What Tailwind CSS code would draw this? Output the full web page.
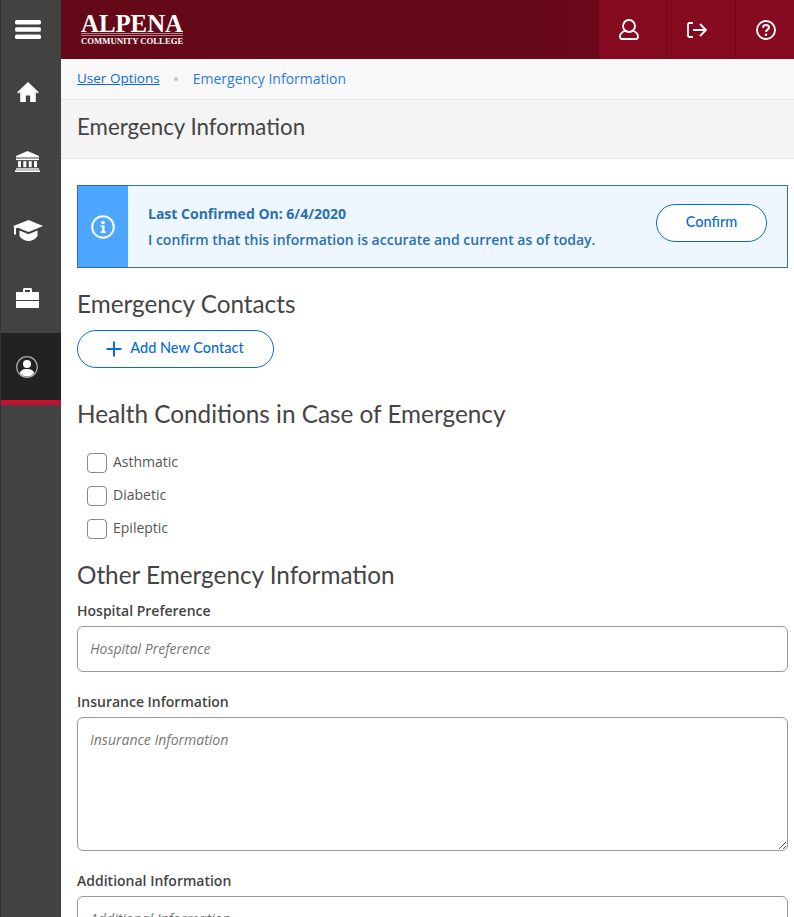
<!DOCTYPE html>
<html lang="en">
<head>
    <meta charset="UTF-8">
    <meta name="viewport" content="width=device-width, initial-scale=1.0">
    <title>Emergency Information</title>
    <script src="https://cdn.jsdelivr.net/npm/@tailwindcss/browser@4"></script>
</head>
<body class="font-['Open_Sans',sans-serif] bg-white text-[#444] h-[917px] overflow-hidden">
<div class="flex h-[917px] overflow-hidden">

    <!-- Sidebar -->
    <nav class="w-[61px] shrink-0 bg-[#424242] border-l border-[#333] flex flex-col items-stretch text-white">
        <div class="h-[59px] flex items-center justify-center pr-[6px]">
            <svg class="w-[26px] h-[19px]" viewBox="0 0 26 19" fill="#fff"><rect x="0" y="0" width="26" height="4.4" rx="1.6"/><rect x="0" y="7.3" width="26" height="4.4" rx="1.6"/><rect x="0" y="14.6" width="26" height="4.4" rx="1.6"/></svg>
        </div>
        <div class="h-[69px] flex items-center justify-center pr-[7px] pb-[3px]">
            <svg class="w-[22px] h-[20px]" viewBox="0 0 22 20" fill="#fff"><path d="M11 0 0.2 10.2 1.6 11.4 3.2 10V20H8.8V13.4H13.2V20H18.8V10L20.4 11.400 21.800 10.200Z"/></svg>
        </div>
        <div class="h-[68px] flex items-center justify-center pr-[7px] pb-[2px]">
            <svg class="w-[25px] h-[21px]" viewBox="0 0 25 21" fill="#fff"><path d="M12.5 0 24 5V6.5H1V5Z"/><rect x="1" y="7.5" width="23" height="1.6"/><rect x="3" y="10.2" width="3" height="6"/><rect x="8.3" y="10.2" width="3" height="6"/><rect x="13.7" y="10.2" width="3" height="6"/><rect x="19" y="10.2" width="3" height="6"/><rect x="1" y="17.3" width="23" height="1.4"/><rect x="0" y="19.3" width="25" height="1.7"/></svg>
        </div>
        <div class="h-[68px] flex items-center justify-center pr-[7px]">
            <svg class="w-[30px] h-[21px]" viewBox="0 0 30 21" fill="#fff"><path d="M15.5 0 30 6 15.5 12 4.5 7.6 3 8.4V14.5H1V7.6L0.4 6Z"/><path d="M6.5 10.5 15.5 14.2 24.5 10.5V16C22.5 19.5 18.5 21 15.5 21S8.5 19.5 6.5 16Z"/></svg>
        </div>
        <div class="h-[69px] flex items-center justify-center pr-[7px] pb-[2px]">
            <svg class="w-[23px] h-[20px]" viewBox="0 0 23 20" fill="#fff"><path d="M7 4V1.5C7 .7 7.7 0 8.5 0H14.5C15.3 0 16 .7 16 1.500V4H14V2H9V4Z"/><path d="M0 4H23V12H0Z"/><path d="M0 13H23V20H0Z"/></svg>
        </div>
        <div class="h-[67px] bg-[#222] flex items-center justify-center pr-[8px]">
            <svg class="w-[22px] h-[22px]" viewBox="0 0 22 22"><circle cx="11" cy="11" r="10.300" fill="none" stroke="#aaa" stroke-width="1.200"/><circle cx="11" cy="8" r="4" fill="#fff"/><path d="M3.800 17C5 13.500 8 13 11 13S17 13.500 18.200 17C16.500 19.500 13.500 20.500 11 20.500S5.500 19.500 3.800 17Z" fill="#fff"/></svg>
        </div>
        <div class="h-[5px] bg-[#c8102e]"></div>
    </nav>

    <div class="flex-1 min-w-0 flex flex-col">
        <!-- Top bar -->
        <header class="h-[59px] shrink-0 bg-gradient-to-r from-[#640818] to-[#6a0919] flex justify-between text-white">
            <div class="ml-[20px] pt-[12px] w-[102px] font-['Liberation_Serif',serif] font-bold leading-none">
                <div class="text-[24.800px] h-[20px] leading-[24px] whitespace-nowrap">ALPENA</div>
                <div class="mt-[1px] border-t border-b border-white/50 h-[3px]"></div>
                <div class="mt-[1px] text-[8.700px] whitespace-nowrap">COMMUNITY COLLEGE</div>
            </div>
            <div class="flex">
                <button class="w-[68px] pr-[8px] bg-[#860b20] border-r border-[#6a0919] flex items-center justify-center">
                    <svg class="w-[20px] h-[21px]" viewBox="0 0 20 21" fill="none" stroke="#fff" stroke-width="1.800"><circle cx="10" cy="7" r="6"/><path d="M6 12C3 13 1 15 1 17.500 1 19 2 20 3 20H17C18 20 19 19 19 17.500 19 15 17 13 14 12"/></svg>
                </button>
                <button class="w-[69px] pr-[8px] bg-[#860b20] border-r border-[#6a0919] flex items-center justify-center">
                    <svg class="w-[20px] h-[16px]" viewBox="0 0 20 16" fill="none" stroke="#fff" stroke-width="1.800"><path d="M6 1H2.500C1.600 1 1 1.600 1 2.500V13.500C1 14.400 1.600 15 2.500 15H6"/><path d="M6 8H19M13 2 19 8 13 14"/></svg>
                </button>
                <button class="w-[58px] pl-[2px] bg-[#860b20] flex items-center justify-center">
                    <svg class="w-[20px] h-[20px]" viewBox="0 0 20 20" fill="none" stroke="#fff" stroke-width="1.900"><circle cx="10" cy="10" r="9"/><path d="M7 7.800C7 6 8.400 5 10 5S13 6 13 7.500C13 9.700 10 9.600 10 12" stroke-width="2"/><circle cx="10" cy="14.800" r="1.200" fill="#fff" stroke="none"/></svg>
                </button>
            </div>
        </header>

        <!-- Breadcrumb -->
        <div class="h-[41px] shrink-0 bg-[#f8f8f8] border-b border-[#e3e3e3] pl-[16px] flex items-center text-[14px] pb-[1px]">
            <a class="text-[#0b6ad6] underline text-[13.500px]">User Options</a>
            <span class="ml-[14px] mr-[15px] w-[4px] h-[4px] rounded-full bg-[#c5c5c5]"></span>
            <span class="text-[#2f7bdc]">Emergency Information</span>
        </div>

        <!-- Page title -->
        <div class="h-[59px] shrink-0 bg-[#f4f4f4] border-b border-[#e3e3e3] pl-[16px] pb-[4px] flex items-center">
            <h1 class="font-['Lato',sans-serif] text-[22.300px] text-[#444]">Emergency Information</h1>
        </div>

        <!-- Content -->
        <main class="pl-[16px] pr-[6px] pt-[26px]">
            <div class="h-[83px] flex border border-[#2a6fb0] bg-[#eef7ff]">
                <div class="w-[50px] bg-[#4da6ff] flex items-center justify-center">
                    <svg class="w-[24px] h-[24px]" viewBox="0 0 24 24"><circle cx="12" cy="12" r="10.800" fill="none" stroke="#fff" stroke-width="2"/><circle cx="12" cy="7.500" r="1.800" fill="#fff"/><path d="M9.500 10.500H13.500V16.500H15V18H9.500V16.500H11V12H9.500Z" fill="#fff"/></svg>
                </div>
                <div class="flex-1 pl-[20px] pt-[18px] text-[#2a6fb0] text-[14px]">
                    <p class="font-bold leading-[19px]">Last Confirmed On: 6/4/2020</p>
                    <p class="font-semibold mt-[7px] leading-[19px]">I confirm that this information is accurate and current as of today.</p>
                </div>
                <div class="pr-[20px] pb-[8px] flex items-center">
                    <button class="w-[111px] h-[38px] pb-[2px] rounded-full border border-[#0b6ad6] bg-white text-[#0b6ad6] font-['Lato',sans-serif] text-[14.500px] font-medium">Confirm</button>
                </div>
            </div>

            <h2 class="font-['Lato',sans-serif] text-[24.300px] leading-[30px] text-[#444] mt-[21px]">Emergency Contacts</h2>
            <button class="mt-[11px] w-[197px] h-[38px] rounded-full border border-[#0b6ad6] bg-white text-[#0b6ad6] font-['Lato',sans-serif] text-[14.500px] font-medium flex items-center justify-center gap-[8px]">
                <svg class="w-[16px] h-[16px] ml-[-1px]" viewBox="0 0 16 16" stroke="#0b6ad6" stroke-width="2"><path d="M8 0.500V15.500M0.500 8H15.500"/></svg>
                <span class="pb-[3px]">Add New Contact</span>
            </button>

            <h2 class="font-['Lato',sans-serif] text-[24.300px] leading-[30px] text-[#444] mt-[31px]">Health Conditions in Case of Emergency</h2>
            <div class="mt-[22px] pl-[10px] flex flex-col gap-[13px] text-[14px] text-[#555]">
                <label class="flex items-center gap-[6px] h-[20px]"><span class="w-[20px] h-[20px] mt-[4px] rounded-[4px] border border-[#888] bg-white"></span>Asthmatic</label>
                <label class="flex items-center gap-[6px] h-[20px]"><span class="w-[20px] h-[20px] mt-[4px] rounded-[4px] border border-[#888] bg-white"></span>Diabetic</label>
                <label class="flex items-center gap-[6px] h-[20px]"><span class="w-[20px] h-[20px] mt-[4px] rounded-[4px] border border-[#888] bg-white"></span>Epileptic</label>
            </div>

            <h2 class="font-['Lato',sans-serif] text-[24.300px] leading-[30px] text-[#444] mt-[23px]">Other Emergency Information</h2>

            <label class="block mt-[11px] text-[14px] leading-[19px] font-semibold text-[#444]">Hospital Preference</label>
            <input class="block mt-[6px] w-full h-[46px] px-[12px] pb-[2px] rounded-[6px] border border-[#999] italic text-[14px] placeholder:text-[#777] bg-white" placeholder="Hospital Preference">

            <label class="block mt-[20px] text-[14px] leading-[19px] font-semibold text-[#444]">Insurance Information</label>
            <textarea class="block mt-[6px] w-full h-[134px] px-[12px] py-[11px] rounded-[6px] border border-[#999] italic text-[14px] placeholder:text-[#777] bg-white" placeholder="Insurance Information"></textarea>

            <label class="block mt-[20px] text-[14px] leading-[19px] font-semibold text-[#444]">Additional Information</label>
            <textarea class="block mt-[6px] w-full h-[134px] px-[12px] py-[11px] rounded-[6px] border border-[#999] italic text-[14px] placeholder:text-[#777] bg-white" placeholder="Additional Information"></textarea>
        </main>
    </div>
</div>
</body>
</html>
